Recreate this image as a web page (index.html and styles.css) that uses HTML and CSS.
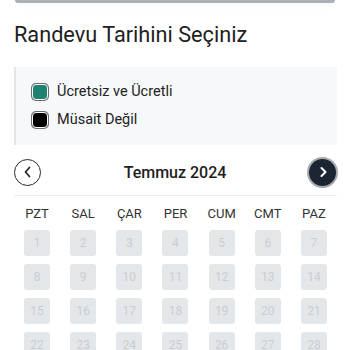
FILE: index.html
```html
<!DOCTYPE html>
<html lang="tr">
<head>
<meta charset="utf-8">
<link rel="stylesheet" href="styles.css">
</head>
<body>
<div class="topbar"></div>
<main class="page">
  <h1 class="title">Randevu Tarihini Seçiniz</h1>
  <div class="legend">
    <div class="legend-item"><span class="swatch swatch-teal"></span><span>Ücretsiz ve Ücretli</span></div>
    <div class="legend-item"><span class="swatch swatch-black"></span><span>Müsait Değil</span></div>
  </div>
  <div class="nav">
    <button class="nav-btn nav-prev" aria-label="Önceki">
      <svg width="14" height="14" viewBox="0 0 14 14"><path d="M8.5 2.5 L4.5 7 L8.5 11.5" fill="none" stroke="#222" stroke-width="1.7" stroke-linecap="round" stroke-linejoin="round"/></svg>
    </button>
    <div class="month">Temmuz 2024</div>
    <button class="nav-btn nav-next" aria-label="Sonraki">
      <svg width="14" height="14" viewBox="0 0 14 14"><path d="M5.5 3 L9.5 7 L5.5 11" fill="none" stroke="#fff" stroke-width="2" stroke-linecap="round" stroke-linejoin="round"/></svg>
    </button>
  </div>
  <div class="grid">
    <div class="wd">PZT</div><div class="wd">SAL</div><div class="wd">ÇAR</div><div class="wd">PER</div><div class="wd">CUM</div><div class="wd">CMT</div><div class="wd">PAZ</div>
    <div class="day">1</div><div class="day">2</div><div class="day">3</div><div class="day">4</div><div class="day">5</div><div class="day">6</div><div class="day">7</div>
    <div class="day">8</div><div class="day">9</div><div class="day">10</div><div class="day">11</div><div class="day">12</div><div class="day">13</div><div class="day">14</div>
    <div class="day">15</div><div class="day">16</div><div class="day">17</div><div class="day">18</div><div class="day">19</div><div class="day">20</div><div class="day">21</div>
    <div class="day">22</div><div class="day">23</div><div class="day">24</div><div class="day">25</div><div class="day">26</div><div class="day">27</div><div class="day">28</div>
  </div>
</main>
</body>
</html>
```

FILE: styles.css
```css
html, body {
  margin: 0;
  padding: 0;
  background: #fff;
  font-family: Roboto, "Liberation Sans", sans-serif;
  color: #222;
  overflow: hidden;
}
.topbar {
  height: 3px;
  margin: 0 15px;
  background: #a9b1b6;
  border-radius: 0 0 4px 4px;
  box-shadow: 0 2px 6px rgba(0,0,0,0.06);
}
.page {
  padding: 0 13px 0 14px;
}
.title {
  margin: 18px 0 0 0;
  font-size: 21.7px;
  line-height: 28px;
  font-weight: 400;
  color: #212121;
}
.legend {
  margin-top: 18px;
  height: 78px;
  box-sizing: border-box;
  background: #f7f8fa;
  border-left: 2px solid #e3e5e8;
  padding: 16px 0 0 16px;
  display: flex;
  flex-direction: column;
  gap: 10px;
}
.legend-item {
  display: flex;
  align-items: center;
  gap: 9px;
  font-size: 14.5px;
  line-height: 18px;
  color: #222;
}
.swatch {
  width: 14px;
  height: 14px;
  border-radius: 4px;
  border: 1.5px solid #fff;
  box-shadow: 0 0 0 1px #6b6b6b;
}
.swatch-teal { background: #1e8271; }
.swatch-black { background: #000; }
.nav {
  margin-top: 12px;
  height: 30px;
  display: flex;
  align-items: center;
  justify-content: space-between;
  padding-bottom: 8px;
  border-bottom: 1px solid #eeeeee;
}
.nav-btn {
  width: 27px;
  height: 27px;
  border-radius: 50%;
  padding: 0;
  display: flex;
  align-items: center;
  justify-content: center;
  box-sizing: border-box;
  cursor: pointer;
}
.nav-prev {
  background: #fff;
  border: 1.6px solid #2a2a2a;
}
.nav-next {
  background: #1c2633;
  border: none;
  box-shadow: 0 0 0 2px #a7abaf;
  margin-right: 1px;
}
.month {
  font-size: 16px;
  font-weight: 500;
  color: #1e1e1e;
}
.grid {
  display: grid;
  grid-template-columns: repeat(7, 1fr);
  justify-items: center;
  row-gap: 8px;
  margin-top: 10px;
}
.wd {
  font-size: 13px;
  line-height: 16px;
  color: #333;
}
.day {
  width: 26px;
  height: 26px;
  border-radius: 3px;
  background: #e4e7ea;
  color: #c9cdd1;
  font-size: 12px;
  display: flex;
  align-items: center;
  justify-content: center;
}
```
